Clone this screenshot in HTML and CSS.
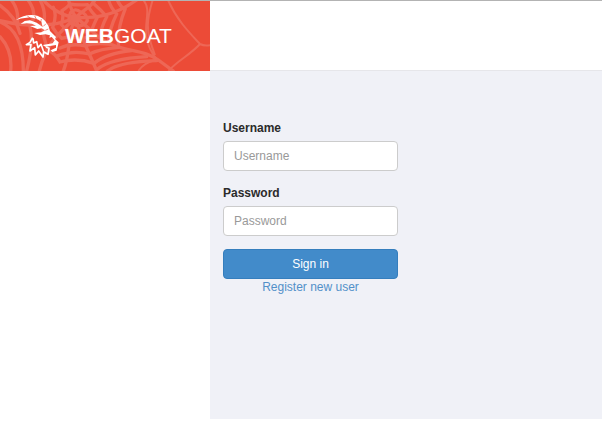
FILE: index.html
```html
<!DOCTYPE html>
<html lang="en">
<head>
<meta charset="utf-8">
<meta name="viewport" content="width=device-width, initial-scale=1">
<title>WebGoat</title>
<link rel="stylesheet" href="styles.css">
</head>
<body>
<header class="header">
  <a class="brand" href="#">
    <svg class="web" viewBox="0 3 630 210" preserveAspectRatio="xMinYMin slice" aria-hidden="true">
      <g fill="none" stroke="#ee6756" stroke-width="10" stroke-linecap="round">
        <path d="M228 52C190 50 150 25 130 0M228 52C170 80 100 85 0 62M228 52C190 90 140 120 118 213M228 52C200 100 215 150 190 213M228 52C235 100 265 150 290 213M228 52C270 85 300 125 350 140S440 155 475 180L520 213M228 52C280 55 340 50 410 0M228 52C250 30 275 20 285 0M228 52C210 30 212 15 205 0"/>
        <path d="M212 38Q225 22 242 36Q262 42 262 62Q250 84 224 74Q198 66 212 38M186 32Q205 20 208 12Q232 16 262 14Q276 40 292 52Q280 76 275 92Q250 98 238 94Q220 104 205 94Q190 80 184 74Q192 50 186 32M160 22Q172 45 158 82Q168 100 185 115Q210 108 244 116Q270 108 300 112Q302 85 320 50Q304 30 278 8M180 144Q215 128 256 138Q280 128 325 132Q326 90 350 42Q330 20 326 0M170 168Q220 150 268 162Q300 146 356 142Q350 90 375 28Q360 20 352 0M140 148Q165 158 180 186Q230 172 282 190Q320 160 395 152M120 0Q142 40 128 84Q130 110 140 140M84 0Q115 40 90 80Q102 130 80 213M290 209Q330 176 440 170M322 213Q360 185 470 182"/>
        <path d="M0 66Q70 92 70 213M0 110Q38 150 32 213M0 16Q48 50 60 100M34 0Q58 30 52 70"/>
      </g>
      <g fill="none" stroke="#ee6756" stroke-width="6">
        <path d="M430 0C465 40 405 95 470 178M458 0C440 60 435 90 465 165M504 0C530 60 570 100 600 132Q615 140 636 134M600 132C570 165 535 180 505 213M470 178C450 186 430 190 415 213"/>
      </g>
    </svg>
    <svg class="goat" viewBox="48 36 138 138" aria-hidden="true">
      <path fill="#fff" d="M48 57Q78 36 112 44Q142 54 150 90L168 108L165 114L176 124L170 149L157 153L152 148L168 140L168 132L136 137L128 132L158 127L164 118L155 108L148 110L150 103L136 100L120 102L103 96L124 94L135 88L125 82L112 84L90 75L108 74L96 68L80 67L62 69L74 60L90 58L110 65L128 78L124 62Q104 48 80 50Q62 51 48 57Z"/>
      <path fill="none" stroke="#ec4b37" stroke-width="2" d="M82 45L92 52M104 45L109 54M124 54L122 65M138 68L130 76M145 84L136 88"/>
      <path fill="none" stroke="#fff" stroke-width="5" stroke-linejoin="round" d="M98 110L90 124L79 131L93 131L90 150L104 140L106 162L116 150L129 168L131 152L144 160L147 142L138 138M99 112L101 126L110 122L114 140L123 130L131 152"/>
    </svg>
    <span class="name"><b>WEB</b>GOAT</span>
  </a>
</header>
<main class="content">
  <form class="login">
    <div class="field">
      <label for="username">Username</label>
      <input id="username" name="username" type="text" placeholder="Username">
    </div>
    <div class="field">
      <label for="password">Password</label>
      <input id="password" name="password" type="password" placeholder="Password">
    </div>
    <button type="submit">Sign in</button>
    <a class="register" href="#">Register new user</a>
  </form>
</main>
</body>
</html>
```
FILE: styles.css
```css
* { box-sizing: border-box; }
body {
  margin: 0;
  min-height: 100vh;
  padding-bottom: 5px;
  display: flex;
  flex-direction: column;
  background: #fff;
  color: #2b2b2b;
  font: 12px/18px "Liberation Sans", Arial, sans-serif;
}
.header {
  display: flex;
  border-top: 1px solid #b3b3b3;
}
.header::after {
  content: "";
  flex: 1;
  border-bottom: 1px solid #e6e6ea;
}
.brand {
  position: relative;
  display: flex;
  align-items: center;
  gap: 3px;
  width: 210px;
  height: 70px;
  padding-left: 16px;
  overflow: hidden;
  background: #ec4b37;
  color: #fff;
  text-decoration: none;
}
.web {
  position: absolute;
  inset: 0;
  width: 100%;
  height: 100%;
}
.goat {
  position: relative;
  width: 46px;
  height: 46px;
}
.name {
  position: relative;
  font-size: 21px;
  line-height: 24px;
}
.content {
  flex: 1;
  margin-left: 210px;
  padding: 48px 13px;
  background: #f0f1f7;
}
.login {
  display: flex;
  flex-direction: column;
  width: 175px;
}
.field {
  display: flex;
  flex-direction: column;
  gap: 4px;
  margin-bottom: 13px;
}
label { font-weight: bold; }
input {
  width: 100%;
  height: 30px;
  padding: 0 10px;
  border: 1px solid #ccc;
  border-radius: 4px;
  background: #fff;
  color: #555;
  font: inherit;
}
input::placeholder { color: #999; }
button {
  height: 30px;
  border: 1px solid #357ebd;
  border-radius: 4px;
  background: #428bca;
  color: #fff;
  font: inherit;
}
.register {
  color: #5290c9;
  line-height: 16px;
  text-align: center;
  text-decoration: none;
}
```
